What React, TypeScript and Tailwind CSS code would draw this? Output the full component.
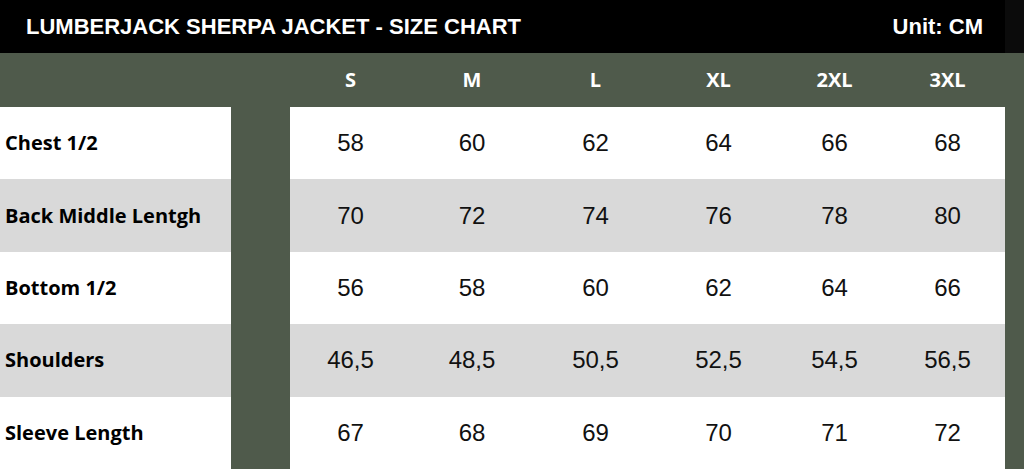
const sizes = ["S", "M", "L", "XL", "2XL", "3XL"];

const rows = [
  { label: "Chest 1/2", values: ["58", "60", "62", "64", "66", "68"] },
  { label: "Back Middle Lentgh", values: ["70", "72", "74", "76", "78", "80"] },
  { label: "Bottom 1/2", values: ["56", "58", "60", "62", "64", "66"] },
  { label: "Shoulders", values: ["46,5", "48,5", "50,5", "52,5", "54,5", "56,5"] },
  { label: "Sleeve Length", values: ["67", "68", "69", "70", "71", "72"] },
];

const cols = "grid grid-cols-[121px_122px_125px_121px_111px_115px]";

export default function App() {
  return (
    <div className="w-[1024px] h-[469px] overflow-hidden bg-[#4f5a4b]">
      <div className="flex h-[53px] bg-[#0b0b0b]">
        <div className="flex w-[1005px] items-center justify-between bg-black pl-[26px] pr-[22px] font-['Liberation_Sans',Arial,sans-serif] font-bold text-white">
          <span className="text-[22px]">LUMBERJACK SHERPA JACKET - SIZE CHART</span>
          <span className="text-[22px]">Unit: CM</span>
        </div>
      </div>

      <div className="flex h-[54px] pl-[290px] font-['Open_Sans',sans-serif] text-[20px] font-bold text-white">
        <div className={cols}>
          {sizes.map((s) => (
            <div key={s} className="flex items-center justify-center">
              {s}
            </div>
          ))}
        </div>
      </div>

      <div className="flex flex-col">
        {rows.map((r, i) => (
          <div key={r.label} className="flex h-[72.4px]">
            <div
              className={`flex w-[231px] items-center pl-[5px] font-['Open_Sans',sans-serif] text-[20px] font-bold text-black ${
                i % 2 ? "bg-[#d9d9d9]" : "bg-white"
              }`}
            >
              {r.label}
            </div>
            <div className="w-[59px]" />
            <div
              className={`${cols} w-[715px] font-['Liberation_Sans',Arial,sans-serif] text-[24px] text-[#111] ${
                i % 2 ? "bg-[#d9d9d9]" : "bg-white"
              }`}
            >
              {r.values.map((v, j) => (
                <div key={j} className="flex items-center justify-center">
                  {v}
                </div>
              ))}
            </div>
          </div>
        ))}
      </div>
    </div>
  );
}
